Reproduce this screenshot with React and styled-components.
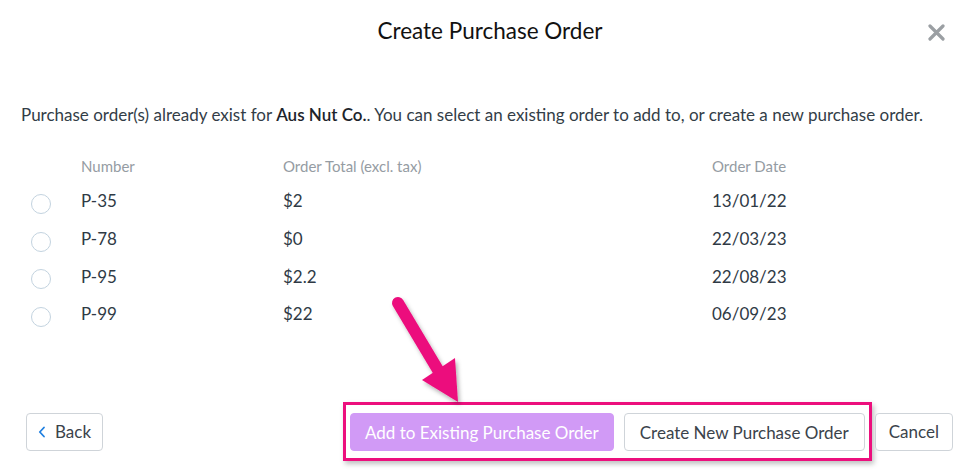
import React from "react";
import styled, { createGlobalStyle } from "styled-components";

const GlobalStyle = createGlobalStyle`
  html, body {
    margin: 0;
    padding: 0;
    background: #ffffff;
  }
  body {
    font-family: Lato, "Open Sans", Arial, sans-serif;
    color: #2f3a45;
  }
`;

const Modal = styled.div`
  position: relative;
  width: 974px;
  height: 473px;
  display: flex;
  flex-direction: column;
  box-sizing: border-box;
`;

const Header = styled.header`
  position: relative;
  height: 60px;
  display: flex;
  align-items: center;
  justify-content: center;
`;

const Title = styled.h2`
  margin: 0;
  font-size: 22.5px;
  font-weight: 400;
  color: #111;
  transform: translateX(3px);
`;

const CloseButton = styled.button`
  position: absolute;
  right: 28px;
  top: 22px;
  width: 20px;
  height: 20px;
  padding: 0;
  border: none;
  background: none;
  display: flex;
  align-items: center;
  justify-content: center;
  cursor: pointer;
`;

const Intro = styled.p`
  margin: 44px 0 0 21px;
  font-size: 17px;
  line-height: 22px;
  color: #333d47;

  strong {
    font-weight: 600;
    color: #1d242b;
  }
`;

const Table = styled.div`
  margin: 23px 0 0 21px;
  display: grid;
  grid-template-columns: 60px 202px 429px 1fr;
`;

const HeadCell = styled.div`
  height: 33px;
  display: flex;
  align-items: center;
  font-size: 15px;
  color: #959ca3;
`;

const Cell = styled.div`
  height: 37.7px;
  display: flex;
  align-items: center;
  font-size: 17px;
  color: #2f3a45;
`;

const RadioCell = styled(Cell)`
  padding-left: 10px;
  padding-top: 6px;
  box-sizing: border-box;
`;

const Radio = styled.span`
  width: 20px;
  height: 20px;
  box-sizing: border-box;
  border-radius: 50%;
  border: 1.5px solid #c3d3df;
  background: #fff;
`;

const Footer = styled.footer`
  margin-top: auto;
  padding: 0 21px 12px 26px;
  display: flex;
  align-items: center;
`;

const Button = styled.button`
  height: 38px;
  box-sizing: border-box;
  padding: 0 ${({ $pad }) => $pad || 13}px;
  border-radius: 4px;
  border: 1px solid ${({ $primary }) => ($primary ? "#d19af6" : "#cfd4d9")};
  background: ${({ $primary }) => ($primary ? "#d19af6" : "#ffffff")};
  color: ${({ $primary }) => ($primary ? "#ffffff" : "#3b434b")};
  font-family: Lato, "Open Sans", Arial, sans-serif;
  font-size: 17px;
  display: flex;
  align-items: center;
  gap: 9px;
  cursor: pointer;
`;

const BackButton = styled(Button)`
  margin-right: auto;
  padding-left: 11px;
  padding-right: 11px;
`;

const Highlight = styled.div`
  display: flex;
  gap: 10px;
  padding: 8px 4px 7px 4px;
  border: 3px solid #ec0f7d;
  box-shadow: 2px 3px 5px rgba(0, 0, 0, 0.25);
  margin-right: 3px;
`;

const Arrow = styled.svg`
  position: absolute;
  left: 380px;
  top: 290px;
  overflow: visible;
`;

const orders = [
  { number: "P-35", total: "$2", date: "13/01/22" },
  { number: "P-78", total: "$0", date: "22/03/23" },
  { number: "P-95", total: "$2.2", date: "22/08/23" },
  { number: "P-99", total: "$22", date: "06/09/23" },
];

export default function App() {
  return (
    <Modal>
      <GlobalStyle />
      <Header>
        <Title>Create Purchase Order</Title>
        <CloseButton aria-label="Close">
          <svg width="17" height="17" viewBox="0 0 17 17">
            <path d="M2 2 L15 15 M15 2 L2 15" stroke="#9b9fa3" strokeWidth="3.2" strokeLinecap="round" />
          </svg>
        </CloseButton>
      </Header>

      <Intro>
        Purchase order(s) already exist for <strong>Aus Nut Co.</strong>. You can select an existing order to add to, or create a new purchase order.
      </Intro>

      <Table>
        <HeadCell />
        <HeadCell>Number</HeadCell>
        <HeadCell>Order Total (excl. tax)</HeadCell>
        <HeadCell>Order Date</HeadCell>
        {orders.map((o) => (
          <React.Fragment key={o.number}>
            <RadioCell>
              <Radio />
            </RadioCell>
            <Cell>{o.number}</Cell>
            <Cell>{o.total}</Cell>
            <Cell>{o.date}</Cell>
          </React.Fragment>
        ))}
      </Table>

      <Footer>
        <BackButton>
          <svg width="8" height="12" viewBox="0 0 8 12">
            <path d="M6 1.5 L1.8 6 L6 10.5" fill="none" stroke="#1f7fe0" strokeWidth="1.8" strokeLinecap="round" strokeLinejoin="round" />
          </svg>
          Back
        </BackButton>
        <Highlight>
          <Button $primary $pad={14}>Add to Existing Purchase Order</Button>
          <Button $pad={15}>Create New Purchase Order</Button>
        </Highlight>
        <Button>Cancel</Button>
      </Footer>

      <Arrow width="90" height="120" viewBox="0 0 90 120">
        <defs>
          <filter id="sh" x="-30%" y="-30%" width="160%" height="160%">
            <feDropShadow dx="2" dy="3" stdDeviation="2" floodColor="#000" floodOpacity="0.3" />
          </filter>
        </defs>
        <g filter="url(#sh)" fill="#ec0f7d">
          <path d="M18 13 L58 80" stroke="#ec0f7d" strokeWidth="12" strokeLinecap="round" />
          <path d="M42 90 L75 68 L78 112 Z" />
        </g>
      </Arrow>
    </Modal>
  );
}
